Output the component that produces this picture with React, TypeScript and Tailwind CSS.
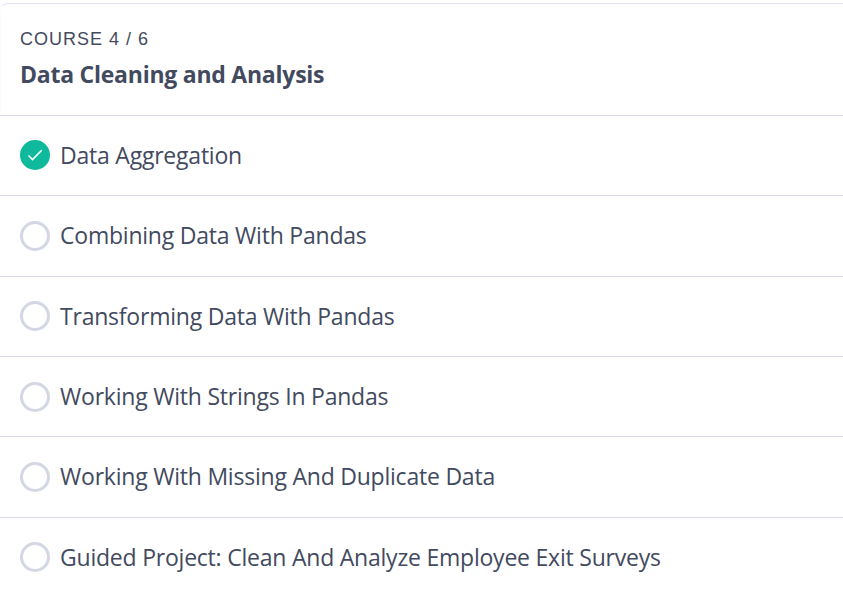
const lessons = [
  { title: "Data Aggregation", done: true, row: "h-[80px]", icon: "mt-6" },
  { title: "Combining Data With Pandas", done: false, row: "h-[81px]", icon: "mt-[25px]" },
  { title: "Transforming Data With Pandas", done: false, row: "h-[80px]", icon: "mt-6" },
  { title: "Working With Strings In Pandas", done: false, row: "h-[80px]", icon: "mt-[25px]" },
  { title: "Working With Missing And Duplicate Data", done: false, row: "h-[81px]", icon: "mt-[25px]" },
  { title: "Guided Project: Clean And Analyze Employee Exit Surveys", done: false, row: "h-[80px]", icon: "mt-6" },
];

function Status({ done, className }: { done: boolean; className: string }) {
  if (!done) return <span className={`size-[30px] shrink-0 rounded-full border-3 border-[#d2d7e3] ${className}`} />;
  return (
    <span className={`flex size-[30px] shrink-0 items-center justify-center rounded-full bg-[#0fb99b] ${className}`}>
      <svg width="30" height="30" viewBox="0 0 30 30" fill="none" stroke="white" strokeWidth="1.6">
        <path d="M8.5 15.5l4 4 9.2-9.2" />
      </svg>
    </span>
  );
}

export default function App() {
  return (
    <main className="h-[592px] w-[843px] overflow-hidden bg-white pt-[3px] font-['Open_Sans',sans-serif] text-[#424a60]">
      <section className="rounded-tl-lg border-t border-l border-[#e2e3ec] border-l-[#fcfcfd]">
        <header className="h-[111px] pt-6 pl-[19px]">
          <p className="font-['Liberation_Sans',sans-serif] text-[18px] leading-[22px] tracking-[1px]">COURSE 4 / 6</p>
          <h1 className="mt-2 text-[23px] leading-8 font-bold tracking-[-0.24px]">Data Cleaning and Analysis</h1>
        </header>
        <ul className="-ml-px bg-white">
          {lessons.map((l) => (
            <li key={l.title} className={`flex items-start gap-2.5 border-t border-[#dadbe8] pl-5 ${l.row}`}>
              <Status done={l.done} className={l.icon} />
              <span className="mt-[23px] text-[23px] leading-8 tracking-[-0.22px] whitespace-nowrap">{l.title}</span>
            </li>
          ))}
        </ul>
      </section>
    </main>
  );
}
